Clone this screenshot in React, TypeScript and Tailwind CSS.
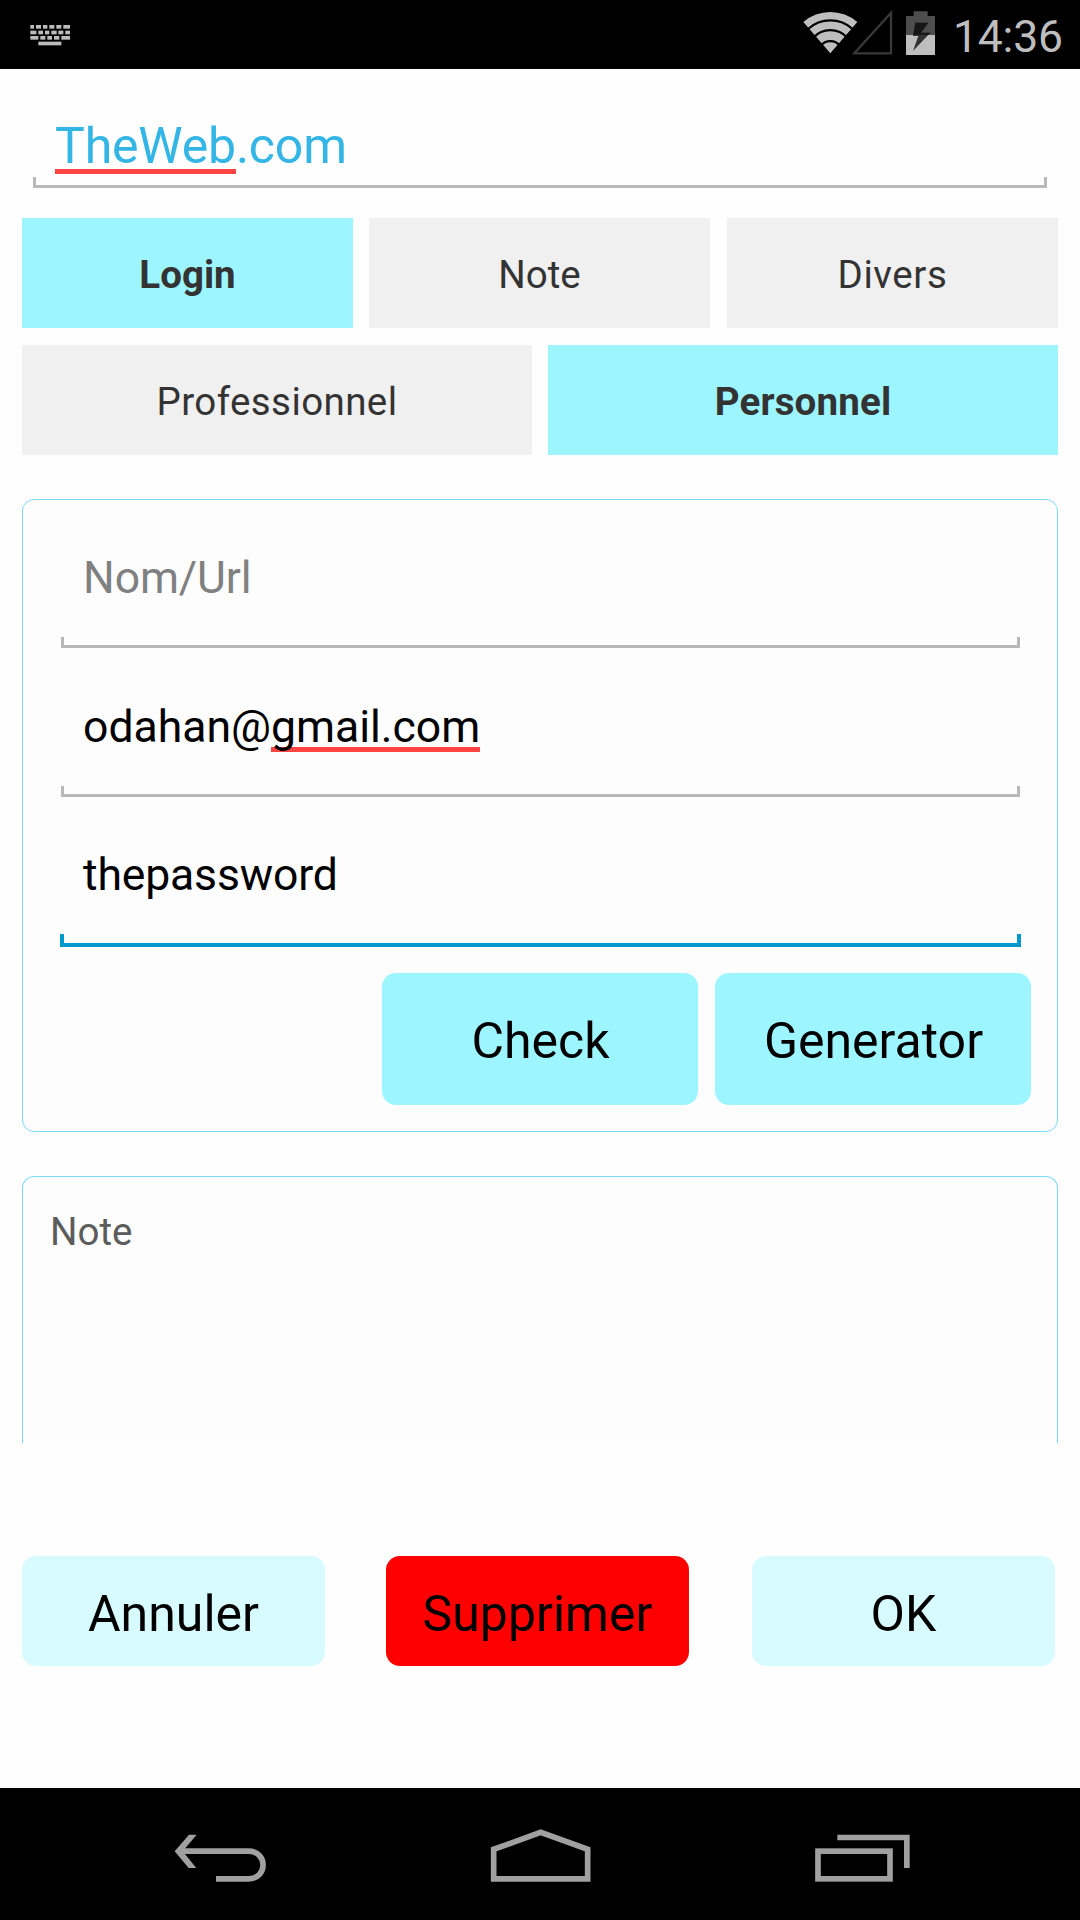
import React from "react";

const KEY_ROWS: { y: number; keys: [number, number][] }[] = [
  { y: 75, keys: [[91, 102], [108, 123], [129, 142], [148, 163], [169, 184], [190, 210]] },
  { y: 92, keys: [[91, 109], [115, 129], [135, 148], [154, 170], [175, 190], [196, 210]] },
  { y: 108, keys: [[91, 115], [121, 136], [142, 156], [162, 178], [184, 210]] },
  { y: 125, keys: [[115, 184]] },
];

function KeyboardIcon() {
  return (
    <svg className="h-[69px] w-[42px]" viewBox="87 0 126 207" fill="#bcbcbc">
      {KEY_ROWS.map((row) =>
        row.keys.map(([a, b]) => (
          <rect key={`${row.y}-${a}`} x={a} y={row.y} width={b - a} height={11} />
        ))
      )}
    </svg>
  );
}

function StatusIcons() {
  return (
    <svg className="h-[69px] w-[133px] shrink-0" viewBox="69 0 399 207">
      <path d="M151 160 L70 66 A124 124 0 0 1 232 66 Z" fill="#bebebe" />
      <g fill="none" stroke="#000" strokeWidth="7">
        <path d="M84 87 A99 99 0 0 1 218 87" />
        <path d="M100 113 A69 69 0 0 1 202 113" />
        <path d="M122 138 A36 36 0 0 1 180 138" />
      </g>
      <path d="M223 160 L333 38 V160 Z" fill="none" stroke="#383838" strokeWidth="7" />
      <path d="M401 34 H443 V48 H465 V105 H378 V48 H401 Z" fill="#4d4d4d" />
      <rect x="378" y="105" width="87" height="60" fill="#bebebe" />
      <path d="M406 68 H445 L423 98 H451 L399 153 L415 108 H399 Z" fill="#333" />
      <path d="M406 68 H445 L423 98 H451 L444 105 H400 Z" fill="#161616" />
    </svg>
  );
}

/* Holo style underline with short upward ticks at both ends */
function HoloLine({ active = false }: { active?: boolean }) {
  return active ? (
    <div className="h-[13px] border-x-[4px] border-b-[4px] border-[#0099cc]" />
  ) : (
    <div className="h-[11px] border-x-[3px] border-b-[3px] border-[#b8b8b8]" />
  );
}

function Misspelled({ children, line }: { children: React.ReactNode; line: string }) {
  return (
    <span className="relative isolate inline-block">
      <span className={`absolute -z-10 h-[5px] bg-[#ff4444] ${line}`} />
      {children}
    </span>
  );
}

function Tab({ label, on, size }: { label: string; on?: boolean; size: string }) {
  return (
    <button
      className={`h-[110px] pt-[3px] text-[38.5px] text-[#333] ${size} ${
        on ? "bg-[#9df6ff] font-bold" : "bg-[#f0f0f0]"
      }`}
    >
      {label}
    </button>
  );
}

export default function App() {
  return (
    <div className="flex h-[1920px] w-[1080px] flex-col overflow-hidden bg-[#fefefe] font-['Roboto',sans-serif] text-black">
      <header className="flex h-[69px] shrink-0 items-center bg-black pl-[29px]">
        <KeyboardIcon />
        <div className="ml-auto flex w-[277px] items-center">
          <StatusIcons />
          <span className="ml-[17px] pt-[4px] text-[44.5px] leading-[60px] tracking-[-0.2px] text-[#bebebe]">
            14:36
          </span>
        </div>
      </header>

      <main className="flex h-[1719px] shrink-0 flex-col">
        <div className="mx-[33px] flex h-[119px] flex-col pt-[47px]">
          <div className="h-[61px] pl-[22px] text-[50px] leading-[60px] tracking-[-0.2px] text-[#33b5e5]">
            <Misspelled line="left-0 right-0 top-[53px]">TheWeb</Misspelled>.com
          </div>
          <HoloLine />
        </div>

        <div className="mx-[22px] mt-[30px] flex">
          <Tab label="Login" on size="w-[331px]" />
          <Tab label="Note" size="ml-[16px] w-[341px]" />
          <Tab label="Divers" size="ml-[17px] w-[331px] tracking-[0.6px]" />
        </div>
        <div className="mx-[22px] mt-[17px] flex justify-between">
          <Tab label="Professionnel" size="w-[510px] tracking-[0.4px]" />
          <Tab label="Personnel" on size="w-[510px] tracking-[0.15px]" />
        </div>

        <section className="mx-[22px] mt-[44px] h-[633px] rounded-[12px] border border-[#7adafc] bg-[#fdfdfd]">
          <div className="mr-[37px] ml-[38px] flex h-[148px] flex-col justify-between pt-[48px]">
            <div className="pl-[22px] text-[44.5px] leading-[60px] tracking-[-0.1px] text-[#808080]">Nom/Url</div>
            <HoloLine />
          </div>
          <div className="mr-[37px] ml-[38px] flex h-[149px] flex-col justify-between pt-[49px]">
            <div className="pl-[22px] text-[44.5px] leading-[60px]">
              odahan@<Misspelled line="left-0 right-0 top-[50px]">gmail.com</Misspelled>
            </div>
            <HoloLine />
          </div>
          <div className="mr-[36px] ml-[37px] flex h-[150px] flex-col justify-between pt-[48px]">
            <div className="pl-[23px] text-[44.5px] leading-[60px] tracking-[-0.15px]">thepassword</div>
            <HoloLine active />
          </div>
          <div className="mt-[26px] mr-[26px] flex justify-end gap-[17px] text-[50px]">
            <button className="h-[132px] w-[316px] rounded-[14px] bg-[#9df6ff] pt-[5px] pl-[1px]">Check</button>
            <button className="h-[132px] w-[316px] rounded-[14px] bg-[#9df6ff] pt-[5px] pl-[1px]">Generator</button>
          </div>
        </section>

        <section className="mx-[22px] mt-[44px] h-[267px] rounded-t-[12px] border border-b-0 border-[#7adafc] bg-[#fdfdfd] pt-[29px] pl-[27px]">
          <div className="text-[38.5px] leading-[52px] text-[#5c5c5c]">Note</div>
        </section>

        <div className="mt-[113px] ml-[22px] flex text-[50px]">
          <button className="h-[110px] w-[303px] rounded-[14px] bg-[#d8fbff] pt-[6px]">Annuler</button>
          <button className="ml-[61px] h-[110px] w-[303px] rounded-[14px] bg-[#ff0000] pt-[6px]">Supprimer</button>
          <button className="ml-[63px] h-[110px] w-[303px] rounded-[14px] bg-[#d8fbff] pt-[6px]">OK</button>
        </div>
      </main>

      <nav className="flex h-[132px] shrink-0 bg-black pl-[173px]">
        <svg className="h-[132px] w-[95px]" viewBox="99 24 285 396" fill="none" stroke="#a0a0a0" strokeWidth="17">
          <path d="M128 213.500 H325 C384 213.500 384 296.500 325 296.500 H228" />
          <path d="M147 164 H170 L128 213.500 L169 264 H146 L104 213.500 Z" fill="#a0a0a0" stroke="none" />
        </svg>
        <svg className="ml-[222px] h-[132px] w-[101px]" viewBox="1050 24 303 396" fill="none" stroke="#a0a0a0" strokeWidth="17">
          <path d="M1061 296.500 V208 L1202 157 L1343 208 V296.500 Z" />
        </svg>
        <svg className="ml-[224px] h-[132px] w-[95px]" viewBox="105 24 285 396" fill="none" stroke="#a0a0a0" strokeWidth="17">
          <rect x="114" y="213.500" width="216" height="83" />
          <path d="M172 172.500 H380.500 V264" />
        </svg>
      </nav>
    </div>
  );
}
